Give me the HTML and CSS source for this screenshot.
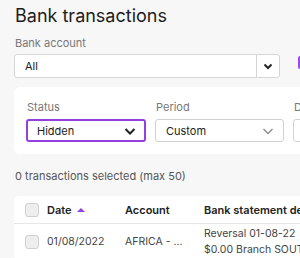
FILE: index.html
```html
<!DOCTYPE html>
<html>
<head>
<meta charset="utf-8">
<link rel="stylesheet" href="styles.css">
</head>
<body>
<div class="page">
  <h1 class="title">Bank transactions</h1>
  <div class="label">Bank account</div>
  <div class="account-row">
    <div class="combo">
      <span class="combo-text">All</span>
      <span class="combo-btn">
        <svg width="12" height="8" viewBox="0 0 12 8"><path d="M2.5 2.5l3.5 3.5 3.5-3.5" fill="none" stroke="#222" stroke-width="2"/></svg>
      </span>
    </div>
    <div class="purple-btn"></div>
  </div>
  <div class="filters">
    <div class="field">
      <div class="flabel">Status</div>
      <div class="select active">
        <span>Hidden</span>
        <svg width="12" height="8" viewBox="0 0 12 8"><path d="M1.5 2l4.5 4.5 4.5-4.5" fill="none" stroke="#222" stroke-width="2"/></svg>
      </div>
    </div>
    <div class="field">
      <div class="flabel">Period</div>
      <div class="select wide">
        <span>Custom</span>
        <svg width="12" height="8" viewBox="0 0 12 8"><path d="M1.5 2l4.5 4.5 4.5-4.5" fill="none" stroke="#8a8a8a" stroke-width="1.3"/></svg>
      </div>
    </div>
    <div class="field">
      <div class="flabel">Date from</div>
      <div class="select wide"><span></span></div>
    </div>
  </div>
  <div class="selected">0 transactions selected (max 50)</div>
  <div class="table">
    <div class="row head">
      <div class="c-check"><span class="box"></span></div>
      <div class="c-date">Date <span class="sort"></span></div>
      <div class="c-acc">Account</div>
      <div class="c-desc">Bank statement description</div>
    </div>
    <div class="row body">
      <div class="c-check"><span class="box"></span></div>
      <div class="c-date">01/08/2022</div>
      <div class="c-acc">AFRICA - ...</div>
      <div class="c-desc">Reversal 01-08-22<br>$0.00 Branch SOUTH AFRICA</div>
    </div>
  </div>
</div>
</body>
</html>
```
FILE: styles.css
```css
html, body {
  margin: 0;
  padding: 0;
  background: #f7f7f7;
  overflow: hidden;
}
body {
  width: 300px;
  height: 258px;
  font-family: Inter, "Noto Sans", sans-serif;
  color: #222;
}
.page {
  padding: 0 0 0 14px;
  width: 400px;
}
.title {
  margin: 0;
  padding: 5px 0 0 1px;
  font-size: 18px;
  font-weight: 400;
  line-height: 22px;
  color: #1c1c1c;
  white-space: nowrap;
}
.label {
  margin-top: 9px;
  font-size: 11px;
  line-height: 14px;
  color: #777;
  padding-left: 1px;
}
.account-row {
  margin-top: 4px;
  display: flex;
  align-items: flex-start;
  gap: 18px;
}
.combo {
  width: 266px;
  height: 24px;
  box-sizing: border-box;
  border: 1px solid #d6d6d6;
  border-radius: 3px;
  background: #fff;
  display: flex;
  align-items: center;
}
.combo-text {
  flex: 1;
  padding-left: 10px;
  font-size: 11px;
  color: #222;
}
.combo-btn {
  width: 22px;
  height: 100%;
  border-left: 1px solid #d6d6d6;
  display: flex;
  align-items: center;
  justify-content: center;
}
.purple-btn {
  width: 20px;
  height: 13px;
  margin-top: 2px;
  background: #9d4ae8;
  border-radius: 2px;
}
.filters {
  margin-top: 9px;
  background: #fff;
  border-radius: 6px;
  height: 67px;
  box-sizing: border-box;
  padding: 13px 12px 0 12px;
  display: flex;
  gap: 9px;
  width: 380px;
}
.flabel {
  font-size: 11px;
  line-height: 14px;
  color: #777;
  padding-left: 1px;
}
.select {
  margin-top: 5px;
  height: 23px;
  box-sizing: border-box;
  width: 120px;
  border: 1px solid #d2d2d2;
  border-radius: 3px;
  background: #fff;
  display: flex;
  align-items: center;
  justify-content: space-between;
  padding: 0 9px 0 10px;
  font-size: 11px;
  color: #222;
}
.select.active {
  border: 2px solid #9440e0;
  padding: 0 8px 0 9px;
}
.select.wide {
  width: 129px;
}
.selected {
  margin-top: 15px;
  font-size: 11px;
  line-height: 14px;
  color: #555;
  padding-left: 1px;
}
.table {
  margin-top: 13px;
  background: #fff;
  border-radius: 5px;
  width: 400px;
}
.row {
  display: flex;
  font-size: 11px;
  border-bottom: 1px solid #e6e6e6;
}
.row.head {
  height: 28px;
  box-sizing: border-box;
  align-items: center;
  font-weight: 600;
  color: #222;
}
.row.body {
  height: 34px;
  align-items: center;
  color: #444;
  font-size: 10.5px;
  line-height: 16px;
  padding-top: 1px;
}
.c-check {
  width: 33px;
  display: flex;
  justify-content: center;
  padding-left: 2px;
  box-sizing: border-box;
}
.box {
  width: 14px;
  height: 14px;
  box-sizing: border-box;
  border: 1px solid #d0d0d0;
  border-radius: 3px;
  background: #eee;
}
.c-date {
  width: 78px;
  display: flex;
  align-items: center;
  gap: 5px;
}
.sort {
  width: 0;
  height: 0;
  border-left: 4px solid transparent;
  border-right: 4px solid transparent;
  border-bottom: 4px solid #9440e0;
}
.c-acc {
  width: 79px;
}
.c-desc {
  white-space: nowrap;
}
```
